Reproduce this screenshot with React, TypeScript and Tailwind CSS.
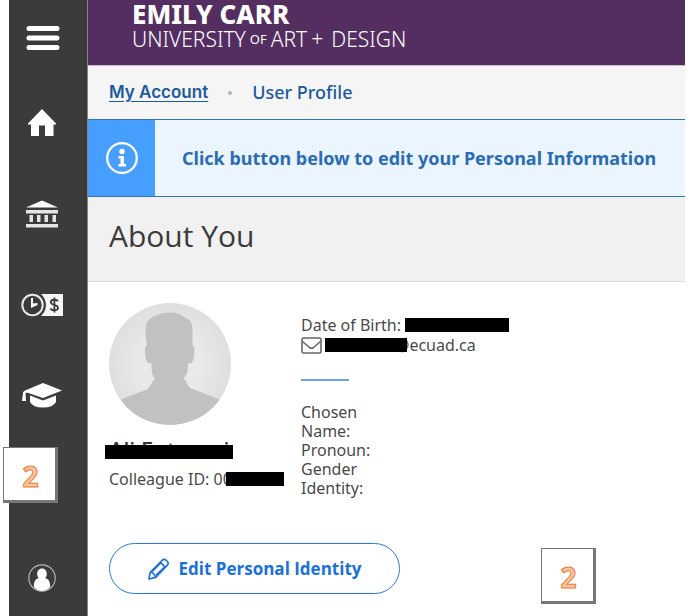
import type { ReactNode } from 'react';

function NavItem({ label, children }: { label: string; children: ReactNode }) {
  return (
    <li>
      <button type="button" aria-label={label} className="flex h-[91px] w-full items-center justify-center pr-3 text-white">
        {children}
      </button>
    </li>
  );
}

function StepBadge() {
  return (
    <div className="flex h-14 w-[55px] items-center justify-center border border-r-3 border-b-3 border-[#777777] bg-white pt-1 pl-0.5 font-['Noto_Sans',sans-serif] text-[28px] leading-none font-bold text-[#fbc7a4] [-webkit-text-stroke:1px_#ed7d31]">
      2
    </div>
  );
}

function Sidebar() {
  return (
    <nav aria-label="Main" className="relative w-[79px] shrink-0 border-r border-[#858585] bg-[#3b3b3b]">
      <button type="button" aria-label="Menu" className="flex h-[77px] w-full items-center justify-center pr-2.5 pb-0.5 text-white">
        <svg width="34" height="26" viewBox="0 0 34 26" stroke="currentColor" strokeWidth="5" strokeLinecap="round">
          <path d="M3 3.500H31M3 13H31M3 22.500H31" />
        </svg>
      </button>
      <ul>
        <NavItem label="Home">
          <svg width="28" height="27" viewBox="0 0 28 27" fill="currentColor">
            <path d="M14 0 28 14.500V15.500H25.500V27H17V16.500H11V27H3V15.500H0V14.500Z" />
          </svg>
        </NavItem>
        <NavItem label="Financial Information">
          <svg width="34" height="28" viewBox="0 0 34 28" fill="#e4e4e4">
            <path fill="#ffffff" d="M17 0.500 33 7.500H1Z" />
            <path d="M1 10H33V13.500H1ZM4.500 15H8V22H4.500ZM12 15H15.500V22H12ZM19.500 15H23V22H19.500ZM27.500 15H31V22H27.500ZM1 24H33V27.500H1Z" />
          </svg>
        </NavItem>
        <NavItem label="Employment">
          <svg width="42" height="24" viewBox="0 0 42 24" fill="none">
            <path fill="#f5f5f5" d="M20 1H42V23H20Q25 18 25 12T20 1Z" />
            <circle cx="11.500" cy="12" r="10.200" stroke="#e8e8e8" strokeWidth="2" />
            <path fill="#ffffff" d="M10 5H12V10.500L16.500 10V12L10 15Z" />
            <path stroke="#3b3b3b" strokeWidth="1.800" d="M37 8.300C35.500 6 29.800 6.200 29.800 9.200C29.800 12.500 37 11.200 37 14.800C37 18 31 18 29.300 15.400M33.400 4.500V19.500" />
          </svg>
        </NavItem>
        <NavItem label="Academics">
          <svg width="40" height="25" viewBox="0 0 40 25" fill="#ffffff">
            <path d="M21 0 40 7.500 21 15 5 9.500 3.500 10.500 4 18H0L1 10Q1 8.500 3 7.500Z" />
            <path d="M8 12.500 21 17.500 34 12.500V19Q31 24.500 21 24.500T8 19Z" />
          </svg>
        </NavItem>
        <li className="h-[91px]" />
        <NavItem label="User Options">
          <svg width="28" height="28" viewBox="0 0 28 28">
            <circle cx="14" cy="14" r="13.200" fill="none" stroke="#b5b5b5" strokeWidth="1.200" />
            <path fill="#ffffff" d="M14 4.500C17 4.500 19 7 18.800 10C18.700 12 18 13.500 17.200 14.300C20.500 15 22 16.800 22.200 23Q18.500 27 14 27T5.800 23C6 16.800 7.500 15 10.800 14.300C10 13.500 9.300 12 9.200 10C9 7 11 4.500 14 4.500Z" />
          </svg>
        </NavItem>
      </ul>
      <div className="absolute top-[447px] -left-1.5">
        <StepBadge />
      </div>
    </nav>
  );
}

function Portrait() {
  return (
    <svg width="122" height="122" viewBox="0 0 122 122" role="img" aria-label="Profile photo">
      <defs>
        <clipPath id="portrait">
          <circle cx="61" cy="61" r="61" />
        </clipPath>
        <radialGradient id="backdrop">
          <stop offset="0.500" stopColor="#e9e9e9" />
          <stop offset="1" stopColor="#dfdfdf" />
        </radialGradient>
      </defs>
      <g clipPath="url(#portrait)">
        <rect width="122" height="122" fill="url(#backdrop)" />
        <path
          fill="#c1c1c1"
          d="M61 9.500C69 9.500 73 12 77 15C83 17 84 23 83.500 33L83.500 42C86 44 86 48 85 54C84 59 82 61 79 60.500C79 69 78.500 71 74.500 75C78 79 78 82 81 85C90 89 101 92 111 97V122H11V97C22 92 32 89 39 86C42 83 42 79 46 76C43 72 42.500 69 42.500 60C39 61 37 59 36.500 54C35.500 47 35.500 44 38 42C36 32 36 24 38 19C42 13 51 10 61 9.500Z"
        />
      </g>
    </svg>
  );
}

function Redacted({ className }: { className: string }) {
  return <span className={`inline-block shrink-0 bg-black ${className}`} />;
}

export default function App() {
  return (
    <div className="flex min-h-screen bg-white pr-[5px] pl-[9px] font-['Noto_Sans',sans-serif] text-[#4a4a4a]">
      <Sidebar />
      <div className="min-w-0 flex-1">
        <header className="h-[65px] bg-[#542e61] pl-11 text-white">
          <div className="text-[26px] leading-[28px] font-extrabold">EMILY CARR</div>
          <div className="flex items-center text-[21px] leading-[22px] font-light whitespace-nowrap">
            UNIVERSITY<span className="mx-1 text-[13px] font-normal">OF</span>ART<span className="mx-1">+</span>
            <span className="ml-1">DESIGN</span>
          </div>
        </header>
        <nav aria-label="Breadcrumb" className="flex h-[54px] items-center border-t border-[#c7bccb] bg-[#f5f5f5] pl-[21px] text-[#1d5aa0]">
          <a href="#account" className="font-['Inter',sans-serif] text-[17px] font-semibold underline underline-offset-3">
            My Account
          </a>
          <span className="mx-5 size-1 rounded-full bg-[#b5b5b5]" />
          <span className="text-[18px] font-medium">User Profile</span>
        </nav>
        <div role="status" className="flex h-[78px] items-stretch border-y border-[#3673b8] bg-[#eaf5ff]">
          <div className="flex w-[67px] items-center justify-center bg-[#469fff]">
            <svg width="32" height="32" viewBox="0 0 32 32" fill="none">
              <circle cx="16" cy="16" r="14.800" stroke="white" strokeWidth="2.300" />
              <circle cx="16" cy="9.500" r="2.700" fill="white" />
              <path fill="white" d="M12.500 14H18V22H20V24.500H12.500V22H14.500V16.500H12.500Z" />
            </svg>
          </div>
          <p className="self-center pl-[27px] text-[18px] font-bold text-[#2b6cb5]">
            Click button below to edit your Personal Information
          </p>
        </div>
        <div className="flex h-[85px] items-center border-b border-[#dddddd] bg-[#f1f1f1] pb-2 pl-[21px]">
          <h1 className="font-['Open_Sans',sans-serif] text-[30px] font-medium text-[#3b3b3b]">About You</h1>
        </div>
        <main className="relative px-[21px] pt-[21px]">
          <div className="flex items-start text-[16px]">
            <section className="w-[192px] shrink-0">
              <Portrait />
              <div className="relative mt-3 h-6 text-[22px] leading-6 font-medium text-[#333333]">
                <span className="flex">
                  Ali Ent<span className="ml-12">i</span>
                </span>
                <Redacted className="absolute top-2 -left-1 h-3.5 w-32" />
              </div>
              <div className="mt-1.5 flex items-center leading-6 whitespace-nowrap">
                Colleague ID: 00
                <Redacted className="-ml-1.5 h-3.5 w-[58px]" />
              </div>
            </section>
            <section className="min-w-0 pt-3 leading-5">
              <div className="flex items-center whitespace-nowrap">
                Date of Birth:
                <Redacted className="ml-1 h-3.5 w-[104px]" />
              </div>
              <div className="flex items-center">
                <svg width="21" height="17" viewBox="0 0 21 17" fill="none" stroke="#666666" strokeWidth="1.600">
                  <rect x="1" y="1" width="19" height="15" rx="1.500" />
                  <path d="M1.500 4.500 8.500 10.500Q10.500 12 12.500 10.500L19.500 4.500" />
                </svg>
                <Redacted className="z-10 ml-[3px] h-3.5 w-[82px]" />
                <span className="-ml-3">@ecuad.ca</span>
              </div>
              <hr className="mt-6 mb-[22px] h-0.5 w-12 border-0 bg-[#6aa5f0]" />
              <dl className="w-[72px] leading-[19px]">
                <dt>Chosen Name:</dt>
                <dt>Pronoun:</dt>
                <dt>Gender Identity:</dt>
              </dl>
            </section>
          </div>
          <button type="button" className="mt-[45px] flex h-[51px] w-[291px] items-center justify-center gap-2.5 rounded-full border border-[#237bdf] bg-white font-['Open_Sans',sans-serif] text-[17px] font-bold text-[#1a70dc]">
            <svg width="21" height="22" viewBox="0 0 22 23" fill="none" stroke="currentColor" strokeWidth="1.700" strokeLinejoin="round">
              <path d="M1 22 2.300 15 15 2.300Q17 0.500 19 2.300L20.300 3.700Q22 5.700 20.300 7.500L8 20.300ZM2.300 15Q6 14.500 8 20.300M13 4.500 18 9.500M4.500 14 13.500 5M8.500 18 17.500 9.500" />
            </svg>
            Edit Personal Identity
          </button>
          <div className="absolute top-[266px] left-[453px]">
            <StepBadge />
          </div>
        </main>
      </div>
    </div>
  );
}
